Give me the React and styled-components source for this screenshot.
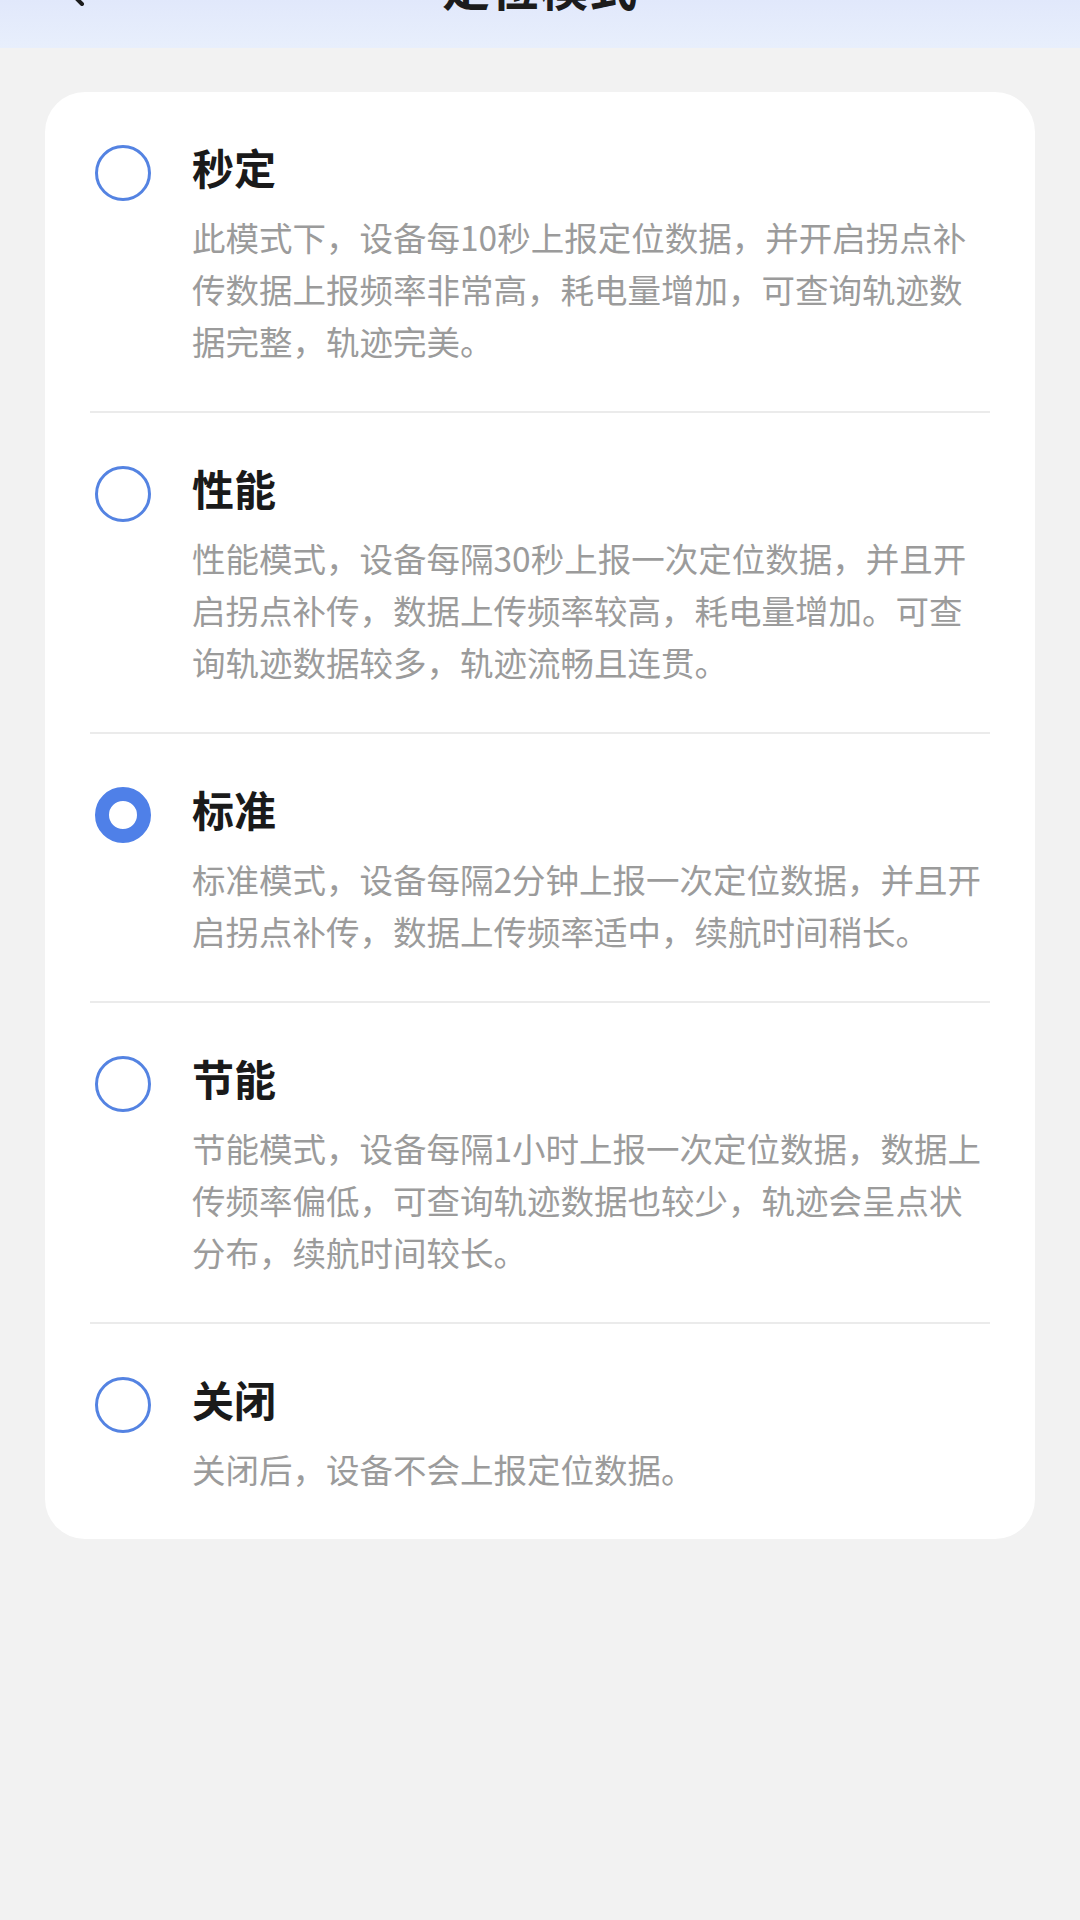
import React, { useState } from "react";
import styled, { createGlobalStyle } from "styled-components";

const GlobalStyle = createGlobalStyle`
  html, body {
    margin: 0;
    padding: 0;
    background: #f2f2f2;
  }
  body {
    font-family: "Noto Sans CJK SC", "Noto Sans", sans-serif;
  }
  * { box-sizing: border-box; }
`;

const Page = styled.div`
  width: 1080px;
  min-height: 1920px;
  background: #f2f2f2;
  display: flex;
  flex-direction: column;
  align-items: stretch;
`;

const Header = styled.header`
  height: 48px;
  overflow: hidden;
  position: relative;
  background: linear-gradient(180deg, #e1e8fb 0%, #e8effc 100%);
  display: flex;
  justify-content: center;
`;

const HeaderTitle = styled.h1`
  margin: -43px 0 0 0;
  font-size: 48px;
  line-height: 56px;
  font-weight: 700;
  color: #1c1c1c;
  letter-spacing: 1px;
`;

const BackButton = styled.span`
  position: absolute;
  left: 58px;
  top: -30px;
  width: 32px;
  height: 36px;
  display: block;
`;

const Card = styled.section`
  margin: 44px 45px 0 45px;
  background: #ffffff;
  border-radius: 40px;
  padding: 0 45px;
  display: flex;
  flex-direction: column;
`;

const Row = styled.div`
  display: flex;
  align-items: flex-start;
  padding: 47px 0 44px 5px;
  cursor: pointer;
`;

const Radio = styled.span`
  flex: none;
  width: 56px;
  height: 56px;
  margin-top: 6px;
  border-radius: 50%;
  border: ${(p) => (p.$checked ? "14px solid #4f80e8" : "3.5px solid #5483e2")};
  background: #ffffff;
`;

const Content = styled.div`
  flex: 1;
  margin-left: 41px;
  display: flex;
  flex-direction: column;
`;

const Title = styled.div`
  font-size: 42px;
  line-height: 56px;
  font-weight: 700;
  color: #1a1a1a;
`;

const Desc = styled.p`
  margin: 16px 0 0 0;
  font-size: 33.5px;
  line-height: 52px;
  color: #9b9b9b;
  font-weight: 400;
`;

const Divider = styled.div`
  height: 2px;
  background: #ebebeb;
`;

const modes = [
  {
    title: "秒定",
    desc: "此模式下，设备每10秒上报定位数据，并开启拐点补传数据上报频率非常高，耗电量增加，可查询轨迹数据完整，轨迹完美。",
  },
  {
    title: "性能",
    desc: "性能模式，设备每隔30秒上报一次定位数据，并且开启拐点补传，数据上传频率较高，耗电量增加。可查询轨迹数据较多，轨迹流畅且连贯。",
  },
  {
    title: "标准",
    desc: "标准模式，设备每隔2分钟上报一次定位数据，并且开启拐点补传，数据上传频率适中，续航时间稍长。",
  },
  {
    title: "节能",
    desc: "节能模式，设备每隔1小时上报一次定位数据，数据上传频率偏低，可查询轨迹数据也较少，轨迹会呈点状分布，续航时间较长。",
  },
  {
    title: "关闭",
    desc: "关闭后，设备不会上报定位数据。",
  },
];

export default function App() {
  const [selected, setSelected] = useState(2);
  return (
    <Page>
      <GlobalStyle />
      <Header>
        <BackButton>
          <svg width="32" height="36" viewBox="0 0 32 36" fill="none">
            <path d="M24 2 L8 18 L24 34" stroke="#1c1c1c" strokeWidth="4" strokeLinecap="round" strokeLinejoin="round" />
          </svg>
        </BackButton>
        <HeaderTitle>定位模式</HeaderTitle>
      </Header>
      <Card>
        {modes.map((m, i) => (
          <React.Fragment key={m.title}>
            {i > 0 && <Divider />}
            <Row onClick={() => setSelected(i)}>
              <Radio $checked={selected === i} />
              <Content>
                <Title>{m.title}</Title>
                <Desc>{m.desc}</Desc>
              </Content>
            </Row>
          </React.Fragment>
        ))}
      </Card>
    </Page>
  );
}
